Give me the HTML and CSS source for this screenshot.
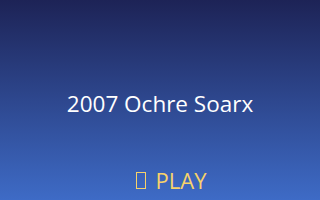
FILE: index.html
```html
<!DOCTYPE html>
<html lang="en">
<head>
    <meta charset="UTF-8">
    <title>2007 Ochre Soarx</title>
    <link rel="stylesheet" href="styles.css">
</head>
<body>
<div class="screen">
    <div class="title">2007 Ochre Soarx</div>
    <div class="play"><span class="tofu"></span>PLAY</div>
</div>
</body>
</html>
```

FILE: styles.css
```css
html, body {
    margin: 0;
    padding: 0;
}

.screen {
    width: 320px;
    height: 200px;
    background: linear-gradient(to bottom, #1d2356, #3e6bc6);
    font-family: "Open Sans", sans-serif;
    display: flex;
    flex-direction: column;
    align-items: center;
    overflow: hidden;
}

.title {
    color: #ffffff;
    font-size: 22.5px;
    margin-top: 88px;
    line-height: 32px;
}

.play {
    color: #f7d26a;
    font-size: 22px;
    line-height: 30px;
    margin-top: 45px;
    margin-left: 22px;
    display: flex;
    align-items: center;
    gap: 10px;
}

.tofu {
    display: inline-block;
    width: 8px;
    height: 15px;
    border: 1.5px solid #f7d26a;
}
```
